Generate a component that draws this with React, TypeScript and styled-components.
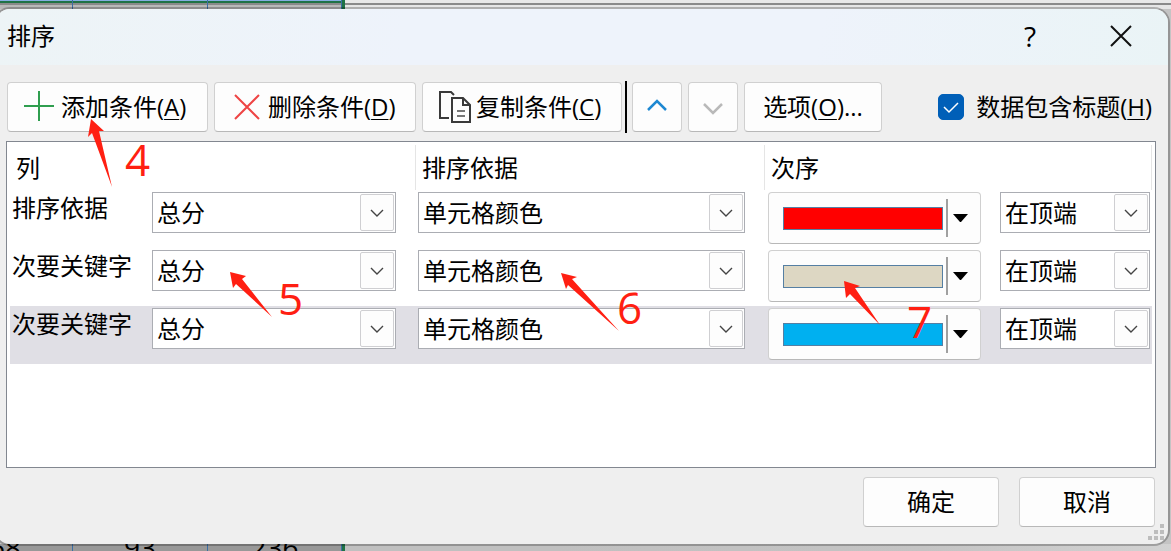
import React from "react";
import styled, { createGlobalStyle } from "styled-components";

const GlobalStyle = createGlobalStyle`
  * { box-sizing: border-box; }
  body {
    margin: 0;
    overflow: hidden;
    color: #000;
    background: #c4c4c4;
    font: 24px/32px "Open Sans", "Noto Sans CJK SC", sans-serif;
  }
  button, select, input { font: inherit; color: inherit; margin: 0; }
`;

const Page = styled.div`
  position: relative;
  display: flex;
  flex-direction: column;
  min-height: 100vh;
`;

const SheetTop = styled.div`
  display: flex;
  height: 9px;
  background: linear-gradient(#e8e8e8 3px, #8a8a8a 3px, #8a8a8a 5px, #e6e6e6 5px);
`;

const SheetTopCell = styled.div<{ $width: number }>`
  width: ${(p) => p.$width}px;
  border-right: 1px solid #3c6ea5;
  background: linear-gradient(
    #85aee0 1px,
    #1f7246 1px,
    #1f7246 3px,
    #8a8a8a 3px,
    #8a8a8a 5px,
    #b8b8b8 5px
  );
`;

const SheetEdge = styled.div`
  width: 3px;
  background: #1f7246;
`;

const SheetBottom = styled.div`
  display: flex;
  height: 7px;
  margin-left: -62px;
  overflow: hidden;
  background: linear-gradient(90deg, #c0c0c0 50%, #c4c4c4 80%, #d2d2d2);
`;

const SheetBottomCell = styled.div<{ $width: number }>`
  display: flex;
  justify-content: center;
  align-items: center;
  flex: none;
  width: ${(p) => p.$width}px;
  border-right: 1px solid #3c6ea5;
  background: #989898;
  font-size: 28px;
  line-height: 7px;
`;

const Dialog = styled.main`
  position: relative;
  display: flex;
  flex-direction: column;
  flex: 1;
  margin: 0 3px 0 -4px;
  border-radius: 14px;
  background: #efefef;
  box-shadow: 0 0 0 2px rgba(0, 0, 0, 0.24);
`;

const TitleBar = styled.header`
  display: flex;
  align-items: center;
  height: 56px;
  padding: 0 26px 2px 11px;
  border-radius: 14px 14px 0 0;
  background: linear-gradient(100deg, #edf4f6, #eef3fb 35%, #eef3fb 70%, #eaf4f6);
`;

const Title = styled.h1`
  flex: 1;
  margin: 0;
  font-size: 24px;
  font-weight: 400;
`;

const CaptionButton = styled.button`
  display: flex;
  justify-content: center;
  align-items: center;
  width: 42px;
  height: 42px;
  margin-left: 49px;
  padding: 0;
  border: 0;
  background: none;
  font-size: 28px;
  line-height: 38px;
`;

const Body = styled.div`
  display: flex;
  flex-direction: column;
  flex: 1;
  gap: 9px;
  padding: 17px 12px 17px 10px;
`;

const Toolbar = styled.div`
  display: flex;
  align-items: center;
  gap: 6px;
  padding: 0 4px 0 1px;
`;

const Button = styled.button<{ $width: number; $icon?: boolean }>`
  display: flex;
  align-items: center;
  justify-content: ${(p) => (p.$icon ? "flex-start" : "center")};
  gap: 5px;
  flex: none;
  width: ${(p) => p.$width}px;
  height: 50px;
  padding: ${(p) => (p.$icon ? "0 0 0 16px" : "0")};
  border: 1px solid #d0d0d0;
  border-bottom-color: #b8b8b8;
  border-radius: 4px;
  background: #fdfdfd;
  white-space: nowrap;
`;

const AccessKey = styled.span`
  text-decoration: underline;
  text-decoration-thickness: 1px;
  text-underline-offset: 3px;
`;

const Separator = styled.div`
  width: 2px;
  height: 52px;
  margin: -1px -1px -1px -3px;
  background: #000;
`;

const CheckLabel = styled.label`
  display: flex;
  align-items: center;
  gap: 12px;
  margin-left: auto;
  white-space: nowrap;
`;

const CheckStack = styled.span`
  display: grid;
  width: 26px;
  height: 26px;
  & > * { grid-area: 1 / 1; }
  & > svg { pointer-events: none; }
`;

const CheckInput = styled.input`
  appearance: none;
  width: 26px;
  height: 26px;
  border: 1px solid #005fb8;
  border-radius: 5px;
  background: #fff;
  &:checked { background: #005fb8; }
  &:not(:checked) + svg { visibility: hidden; }
`;

const ListBox = styled.div`
  flex: 1;
  padding: 3px;
  border: 1px solid #828790;
  background: #fff;
`;

const Levels = styled.table`
  width: 100%;
  table-layout: fixed;
  border-collapse: separate;
  border-spacing: 0;
`;

const HeadCell = styled.th<{ $width?: number }>`
  width: ${(p) => (p.$width ? `${p.$width}px` : "auto")};
  height: 45px;
  padding: 0 6px;
  border-right: 1px solid #e5e5e5;
  font-weight: 400;
  text-align: left;
`;

const LevelRow = styled.tr<{ $selected?: boolean }>`
  background: ${(p) => (p.$selected ? "#e0dfe5" : "transparent")};
`;

const LevelCell = styled.td`
  padding: 0;
`;

const CellContent = styled.div<{ $left: number; $right: number }>`
  display: flex;
  align-items: flex-start;
  height: 58px;
  padding: 2px ${(p) => p.$right}px 0 ${(p) => p.$left}px;
`;

const LevelLabel = styled.span`
  width: 140px;
  flex: none;
`;

const ComboFrame = styled.div<{ $width?: number }>`
  display: grid;
  flex: ${(p) => (p.$width ? "none" : "1")};
  width: ${(p) => (p.$width ? `${p.$width}px` : "auto")};
  height: 41px;
  border: 1px solid #abadb3;
  background: #fff;
  & > * { grid-area: 1 / 1; }
`;

const ComboSelect = styled.select`
  appearance: none;
  width: 100%;
  height: 39px;
  padding: 0 36px 0 4px;
  border: 0;
  border-radius: 0;
  background: none;
`;

const ComboArrow = styled.span`
  display: flex;
  align-items: center;
  justify-content: center;
  justify-self: end;
  width: 34px;
  height: 37px;
  margin: 1px;
  border: 1px solid #cfcfd2;
  border-radius: 2px;
  background: #fdfdfd;
  pointer-events: none;
`;

const ColorButton = styled.button`
  display: flex;
  align-items: center;
  flex: 1;
  height: 52px;
  margin-right: 19px;
  padding: 0 12px 0 14px;
  border: 1px solid #d0d0d0;
  border-bottom-color: #b8b8b8;
  border-radius: 4px;
  background: #fdfdfd;
`;

const ColorSwatch = styled.span<{ $color: string }>`
  flex: 1;
  height: 23px;
  border: 1px solid #557fa3;
  background: ${(p) => p.$color};
`;

const ColorDivider = styled.span`
  width: 2px;
  height: 38px;
  margin: 0 5px 0 3px;
  background: #a0a0a0;
`;

const Footer = styled.footer`
  display: flex;
  justify-content: flex-end;
  gap: 20px;
  padding-right: 1px;
`;

const Grip = styled.svg`
  position: absolute;
  right: 4px;
  bottom: 4px;
`;

const Marks = styled.div`
  position: absolute;
  inset: 0;
  color: #ff1f12;
  pointer-events: none;
`;

const MarkArrows = styled.svg`
  position: absolute;
  left: 0;
  top: 0;
`;

const MarkNumber = styled.span<{ $x: number; $y: number }>`
  position: absolute;
  left: ${(p) => p.$x}px;
  top: ${(p) => p.$y}px;
  font-size: 44px;
  line-height: 44px;
`;

const PlusIcon = () => (
  <svg width="32" height="32" fill="none" stroke="#2f9e4f" strokeWidth="2" aria-hidden="true">
    <path d="M15 0V30M0 15H30" />
  </svg>
);

const DeleteIcon = () => (
  <svg width="32" height="32" fill="none" stroke="#ee4444" strokeWidth="2" aria-hidden="true">
    <path d="M4 4L28 28M28 4L4 28" />
  </svg>
);

const CopyIcon = () => (
  <svg width="32" height="32" fill="none" stroke="#3a3a3a" strokeWidth="2" aria-hidden="true">
    <path d="M10 27H1V1H12L15 4" />
    <path d="M13 7H24L31 14V31H13Z" />
    <path d="M24 7V14H31" />
    <path d="M18 20H26M18 25H26" stroke="#777" />
  </svg>
);

const Chevron = ({ color, up }: { color: string; up?: boolean }) => (
  <svg width="20" height="20" fill="none" stroke={color} strokeWidth="2.5" aria-hidden="true">
    <path d={up ? "M1 13L10 4L19 13" : "M1 7L10 16L19 7"} />
  </svg>
);

const Combo = ({ label, value, width }: { label: string; value: string; width?: number }) => (
  <ComboFrame $width={width}>
    <ComboSelect aria-label={label} defaultValue={value}>
      <option>{value}</option>
    </ComboSelect>
    <ComboArrow>
      <svg width="14" height="8" fill="none" stroke="#444" strokeWidth="1.4" aria-hidden="true">
        <path d="M1 1L7 7L13 1" />
      </svg>
    </ComboArrow>
  </ComboFrame>
);

const levels = [
  { label: "排序依据", color: "#ff0000", selected: false },
  { label: "次要关键字", color: "#ddd7c3", selected: false },
  { label: "次要关键字", color: "#00b0f0", selected: true },
];

const arrows = [
  "91,119 104,131 99,131 112,187 92,133 88,137",
  "230,272 246,276 242,279 272,317 236,284 233,288",
  "561,273 577,277 572,279 619,331 568,285 566,289",
  "844,281 860,286 855,288 880,325 850,294 846,298",
];

const numbers = [
  { text: "4", x: 125, y: 137 },
  { text: "5", x: 278, y: 276 },
  { text: "6", x: 617, y: 285 },
  { text: "7", x: 907, y: 299 },
];

export default function App() {
  return (
    <Page>
      <GlobalStyle />
      <SheetTop>
        <SheetTopCell $width={73} />
        <SheetTopCell $width={135} />
        <SheetTopCell $width={134} />
        <SheetEdge />
      </SheetTop>
      <Dialog>
        <TitleBar>
          <Title>排序</Title>
          <CaptionButton type="button" aria-label="帮助">?</CaptionButton>
          <CaptionButton type="button" aria-label="关闭">
            <svg width="22" height="22" fill="none" stroke="#111" strokeWidth="2">
              <path d="M1 1L21 21M21 1L1 21" />
            </svg>
          </CaptionButton>
        </TitleBar>
        <Body>
          <Toolbar>
            <Button type="button" $width={201} $icon>
              <PlusIcon />
              <span>添加条件(<AccessKey>A</AccessKey>)</span>
            </Button>
            <Button type="button" $width={202} $icon>
              <DeleteIcon />
              <span>删除条件(<AccessKey>D</AccessKey>)</span>
            </Button>
            <Button type="button" $width={200} $icon>
              <CopyIcon />
              <span>复制条件(<AccessKey>C</AccessKey>)</span>
            </Button>
            <Separator />
            <Button type="button" $width={50} aria-label="上移">
              <Chevron color="#1e88d2" up />
            </Button>
            <Button type="button" $width={50} aria-label="下移">
              <Chevron color="#b9b9b9" />
            </Button>
            <Button type="button" $width={138}>
              <span>选项(<AccessKey>O</AccessKey>)...</span>
            </Button>
            <CheckLabel>
              <CheckStack>
                <CheckInput type="checkbox" defaultChecked />
                <svg width="26" height="26" fill="none" stroke="#fff" strokeWidth="1.5">
                  <path d="M6 13L11 18L20 9" />
                </svg>
              </CheckStack>
              <span>数据包含标题(<AccessKey>H</AccessKey>)</span>
            </CheckLabel>
          </Toolbar>
          <ListBox>
            <Levels>
              <thead>
                <tr>
                  <HeadCell $width={406}>列</HeadCell>
                  <HeadCell $width={349}>排序依据</HeadCell>
                  <HeadCell>次序</HeadCell>
                </tr>
              </thead>
              <tbody>
                {levels.map((level, i) => (
                  <LevelRow key={i} $selected={level.selected}>
                    <LevelCell>
                      <CellContent $left={2} $right={20}>
                        <LevelLabel>{level.label}</LevelLabel>
                        <Combo label="列" value="总分" />
                      </CellContent>
                    </LevelCell>
                    <LevelCell>
                      <CellContent $left={2} $right={20}>
                        <Combo label="排序依据" value="单元格颜色" />
                      </CellContent>
                    </LevelCell>
                    <LevelCell>
                      <CellContent $left={3} $right={2}>
                        <ColorButton type="button" aria-label="颜色">
                          <ColorSwatch $color={level.color} />
                          <ColorDivider />
                          <svg width="15" height="8" aria-hidden="true">
                            <path d="M0 0H15L8 8H7Z" />
                          </svg>
                        </ColorButton>
                        <Combo label="次序" value="在顶端" width={150} />
                      </CellContent>
                    </LevelCell>
                  </LevelRow>
                ))}
              </tbody>
            </Levels>
          </ListBox>
          <Footer>
            <Button type="button" $width={136}>确定</Button>
            <Button type="button" $width={136}>取消</Button>
          </Footer>
        </Body>
        <Grip width="16" height="16" fill="#bdbdbd" aria-hidden="true">
          <path d="M12 0h4v4h-4zM6 6h4v4h-4zM12 6h4v4h-4zM0 12h4v4h-4zM6 12h4v4h-4zM12 12h4v4h-4z" />
        </Grip>
      </Dialog>
      <SheetBottom>
        <SheetBottomCell $width={135}>68</SheetBottomCell>
        <SheetBottomCell $width={135}>93</SheetBottomCell>
        <SheetBottomCell $width={134}>236</SheetBottomCell>
        <SheetEdge />
      </SheetBottom>
      <Marks>
        <MarkArrows width="900" height="350" fill="currentColor" aria-hidden="true">
          {arrows.map((points) => (
            <polygon key={points} points={points} />
          ))}
        </MarkArrows>
        {numbers.map((n) => (
          <MarkNumber key={n.text} $x={n.x} $y={n.y}>{n.text}</MarkNumber>
        ))}
      </Marks>
    </Page>
  );
}
